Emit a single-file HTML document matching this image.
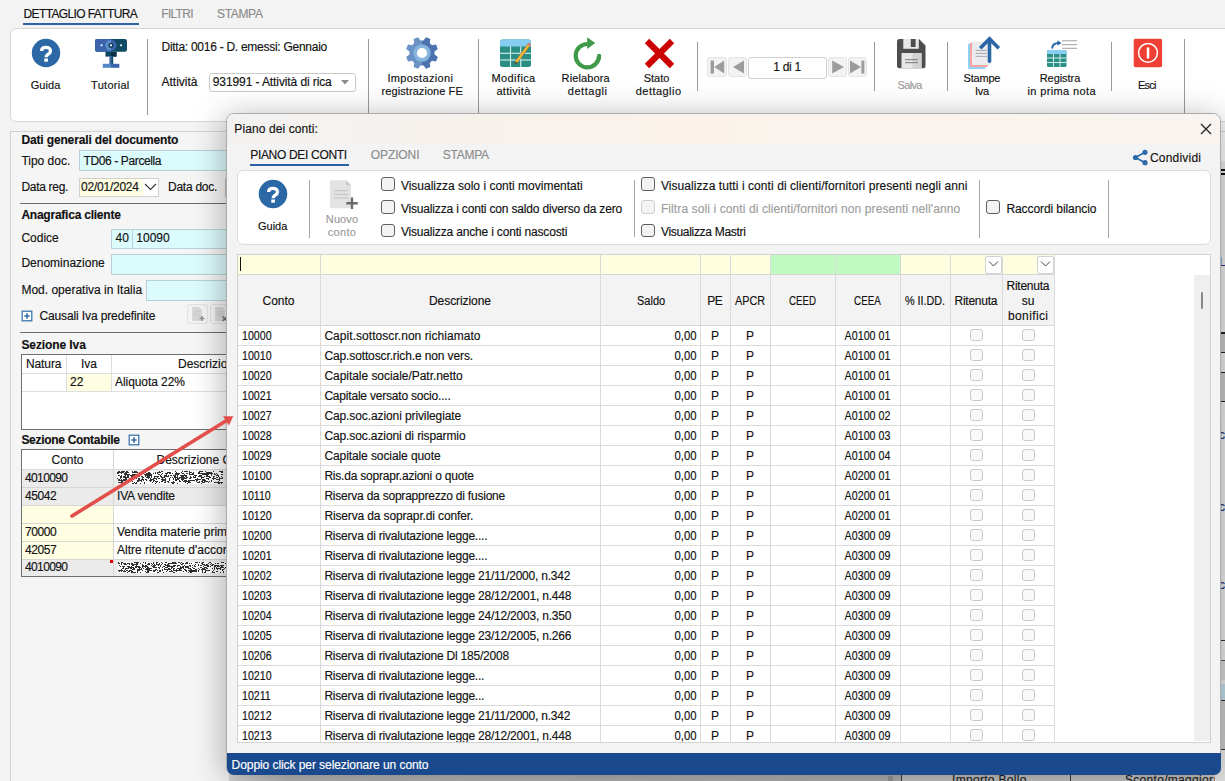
<!DOCTYPE html>
<html><head><meta charset="utf-8">
<style>
*{box-sizing:border-box}
html,body{margin:0;padding:0;overflow:hidden}
body{width:1225px;height:781px;overflow:hidden;position:relative;background:#f3f3f3;font-family:"Liberation Sans",sans-serif;font-size:12px;color:#111}
.a{position:absolute}
.t{position:absolute;white-space:pre;line-height:14px;font-size:12px;-webkit-text-stroke:0.15px currentColor}
.c{text-align:center}
.sep{position:absolute;width:1px;background:#9a9a9a}
/* ribbon */
#ribbon{position:absolute;left:10px;top:28px;width:1230px;height:94px;border:1px solid #d6d6d6;border-radius:6px;background:#fff}
/* left panel */
#lp{position:absolute;left:10px;top:131px;width:1300px;height:660px;border:1px solid #d2d2d2;background:#f5f5f5}
.b{font-weight:bold}
.inp{position:absolute;border:1px solid #b9cfd9;background:#dcfbfd}
/* dialog */
#dlg{position:absolute;left:226px;top:113px;width:995px;height:662px;border-radius:8px;background:#f3f3f3;box-shadow:-2px 4px 32px rgba(0,0,0,.3);overflow:hidden;border:1px solid #ababab}
</style></head><body>

<!-- ===== background app ===== -->
<div class="t" style="left:23.5px;top:7px;letter-spacing:-0.62px">DETTAGLIO FATTURA</div>
<div class="a" style="left:23px;top:23px;width:116px;height:2px;background:#2d63a6"></div>
<div class="t" style="left:161.3px;top:7px;color:#8c8c8c;letter-spacing:-0.72px">FILTRI</div>
<div class="t" style="left:217px;top:7px;color:#8c8c8c;letter-spacing:-0.33px">STAMPA</div>

<div id="ribbon"></div>
<!-- separators -->
<div class="sep" style="left:147px;top:39px;height:76px"></div>
<div class="sep" style="left:368px;top:39px;height:76px"></div>
<div class="sep" style="left:478px;top:39px;height:76px"></div>
<div class="sep" style="left:697px;top:42px;height:49px"></div>
<div class="sep" style="left:874px;top:42px;height:49px"></div>
<div class="sep" style="left:947px;top:42px;height:49px"></div>
<div class="sep" style="left:1111px;top:42px;height:49px"></div>
<div class="sep" style="left:1184px;top:39px;height:80px"></div>

<!-- Guida icon -->
<svg class="a" style="left:31px;top:38px" width="30" height="30" viewBox="0 0 30 30">
<circle cx="15" cy="15" r="14.2" fill="#2c68a5"/>
<path d="M10.6 13C10.6 10.3 12.6 9.3 15 9.3C17.6 9.3 19.5 10.8 19.5 12.9C19.5 14.8 18.2 15.6 16.9 16.4C15.7 17.2 15.1 17.8 15.1 19.3" fill="none" stroke="#fff" stroke-width="3.3"/>
<rect x="13.3" y="20.5" width="3.6" height="3.2" fill="#fff"/>
</svg>

<!-- Tutorial webcam -->
<svg class="a" style="left:94px;top:38px" width="34" height="32" viewBox="0 0 34 32">
<defs><clipPath id="lensL"><rect x="0" y="0" width="17" height="20"/></clipPath></defs>
<rect x="1" y="1" width="32" height="12.8" rx="2.2" fill="#0f4b64"/>
<path d="M3.2 1H17V13.8H3.2A2.2 2.2 0 0 1 1 11.6V3.2A2.2 2.2 0 0 1 3.2 1z" fill="#3d63ad"/>
<circle cx="17" cy="7.3" r="5.5" fill="#3d63ad"/>
<circle cx="17" cy="7.3" r="5.5" fill="#5b8fca" clip-path="url(#lensL)"/>
<circle cx="17" cy="7.3" r="2.6" fill="#123f60"/>
<circle cx="17" cy="7.3" r="1.1" fill="#fff"/>
<rect x="6.6" y="6.4" width="1.8" height="1.8" fill="#fff"/>
<rect x="26.2" y="6.4" width="1.8" height="1.8" fill="#fff"/>
<rect x="11.5" y="13.8" width="11" height="4.8" fill="#0b4660"/>
<rect x="17" y="13.8" width="5.5" height="4.8" fill="#0a2f48"/>
<rect x="15.4" y="18.6" width="2" height="7.4" fill="#3d63ad"/>
<rect x="17.2" y="18.6" width="2" height="7.4" fill="#0d4a63"/>
<rect x="8.8" y="25.8" width="8.2" height="4" fill="#5088c8"/>
<rect x="17" y="25.8" width="8.3" height="4" fill="#3d63ad"/>
</svg>

<!-- Ditta / Attivita -->
<div class="t" style="left:161.5px;top:39.7px;letter-spacing:-0.27px">Ditta: 0016 - D. emessi: Gennaio</div>
<div class="t" style="left:161.5px;top:75px">Attività</div>
<div class="a" style="left:208.5px;top:72.5px;width:147px;height:19.5px;border:1px solid #c9c9c9;border-radius:3px;background:#fff"></div>
<div class="t" style="left:212.8px;top:75px;letter-spacing:-0.1px">931991 - Attività di rica</div>
<svg class="a" style="left:340px;top:79px" width="10" height="6" viewBox="0 0 10 6"><path d="M1 1h8l-4 4.5z" fill="#8a8a8a"/></svg>

<!-- Gear -->
<svg class="a" style="left:405px;top:35.7px" width="34" height="34" viewBox="0 0 34 34">
<defs><clipPath id="gl"><rect x="0" y="0" width="17" height="34"/></clipPath><clipPath id="gr"><rect x="17" y="0" width="17" height="34"/></clipPath></defs>
<path d="M18.54 4.49 L20.94 1.18 L25.40 3.03 L24.76 7.07 L26.93 9.24 L30.97 8.60 L32.82 13.06 L29.51 15.46 L29.51 18.54 L32.82 20.94 L30.97 25.40 L26.93 24.76 L24.76 26.93 L25.40 30.97 L20.94 32.82 L18.54 29.51 L15.46 29.51 L13.06 32.82 L8.60 30.97 L9.24 26.93 L7.07 24.76 L3.03 25.40 L1.18 20.94 L4.49 18.54 L4.49 15.46 L1.18 13.06 L3.03 8.60 L7.07 9.24 L9.24 7.07 L8.60 3.03 L13.06 1.18 L15.46 4.49Z" fill="#6a92c4" clip-path="url(#gl)"/>
<path d="M18.54 4.49 L20.94 1.18 L25.40 3.03 L24.76 7.07 L26.93 9.24 L30.97 8.60 L32.82 13.06 L29.51 15.46 L29.51 18.54 L32.82 20.94 L30.97 25.40 L26.93 24.76 L24.76 26.93 L25.40 30.97 L20.94 32.82 L18.54 29.51 L15.46 29.51 L13.06 32.82 L8.60 30.97 L9.24 26.93 L7.07 24.76 L3.03 25.40 L1.18 20.94 L4.49 18.54 L4.49 15.46 L1.18 13.06 L3.03 8.60 L7.07 9.24 L9.24 7.07 L8.60 3.03 L13.06 1.18 L15.46 4.49Z" fill="#4c72b0" clip-path="url(#gr)"/>
<circle cx="17" cy="17" r="8.7" fill="#86b4de"/>
<circle cx="17" cy="17" r="5.1" fill="#fff"/>
</svg>

<!-- Modifica attivita -->
<svg class="a" style="left:499px;top:39px" width="34" height="30" viewBox="0 0 34 30">
<rect x="1" y="0.6" width="31" height="27.5" rx="2.5" fill="#2b8e85"/>
<path d="M1 3.1a2.5 2.5 0 0 1 2.5-2.5h26a2.5 2.5 0 0 1 2.5 2.5v4.4h-31z" fill="#86cdf2"/>
<g stroke="#d7f0ec" stroke-width="1.1">
<line x1="1" y1="14.3" x2="32" y2="14.3"/><line x1="1" y1="21" x2="32" y2="21"/>
<line x1="11.5" y1="7.5" x2="11.5" y2="28"/><line x1="21.7" y1="7.5" x2="21.7" y2="28"/>
</g>
<path d="M28.6 5.2l2.3 1.7-12.2 16.6-2.6 1.3 0.3-3z" fill="#f3b73a" stroke="#7a5a20" stroke-width="0.45"/>
<path d="M28.6 5.2l2.3 1.7 1.1-1.6-2.3-1.7z" fill="#e86f79"/>
<path d="M16.1 24.8l0.3-2.1 1.8 1.3z" fill="#222"/>
</svg>

<!-- Rielabora refresh -->
<svg class="a" style="left:571px;top:36px" width="34" height="36" viewBox="0 0 34 36">
<path d="M28.1 19.8A11.7 11.7 0 1 1 16.6 8" fill="none" stroke="#3e9a48" stroke-width="4.2"/>
<circle cx="28.1" cy="19.8" r="2.1" fill="#3e9a48"/>
<path d="M16.2 1.2L24.2 7.1 16.2 12.9z" fill="#3e9a48"/>
</svg>

<!-- Stato X -->
<svg class="a" style="left:644px;top:38px" width="31" height="31" viewBox="0 0 31 31">
<path d="M3 3L28 28M28 3L3 28" stroke="#cc0000" stroke-width="6.2"/>
</svg>

<!-- nav -->
<div class="a" style="left:707px;top:56.5px;width:19.5px;height:20px;border:1px solid #e4e4e4;border-radius:3px;background:#f3f3f3"></div>
<div class="a" style="left:727.5px;top:56.5px;width:19.5px;height:20px;border:1px solid #e4e4e4;border-radius:3px;background:#f3f3f3"></div>
<div class="a" style="left:747.5px;top:57px;width:79px;height:21.5px;border:1px solid #cfcfcf;border-radius:3px;background:#fff"></div>
<div class="a" style="left:827.5px;top:56.5px;width:19px;height:20px;border:1px solid #e4e4e4;border-radius:3px;background:#f3f3f3"></div>
<div class="a" style="left:847.5px;top:56.5px;width:19.5px;height:20px;border:1px solid #e4e4e4;border-radius:3px;background:#f3f3f3"></div>
<svg class="a" style="left:707px;top:56px" width="162" height="22" viewBox="0 0 162 22">
<rect x="3.6" y="4.6" width="3.4" height="13" fill="#9c9c9c"/><path d="M7.2 11.1l10-6.5v13z" fill="#9c9c9c"/>
<path d="M26 11.1l11-6.5v13z" fill="#9c9c9c"/>
<path d="M137 11.1l-11.8-6.5v13z" fill="#9c9c9c"/>
<path d="M154 11.1l-11-6.5v13z" fill="#9c9c9c"/><rect x="154.4" y="4.6" width="3" height="13" fill="#9c9c9c"/>
</svg>
<div class="t c" style="left:747.5px;top:60px;width:79px;letter-spacing:-0.3px">1 di 1</div>

<!-- Salva floppy -->
<svg class="a" style="left:896px;top:38px" width="31" height="31" viewBox="0 0 31 31">
<path d="M3.5 1h19.5l6.5 6.5v20.2a2.5 2.5 0 0 1-2.5 2.5h-23.5a2.5 2.5 0 0 1-2.5-2.5v-24.2a2.5 2.5 0 0 1 2.5-2.5z" fill="#4d4d4d"/>
<rect x="7.3" y="1" width="15.5" height="9.8" fill="#e6e6e6"/>
<rect x="14.8" y="1" width="4.8" height="8" fill="#4d4d4d"/>
<rect x="5.5" y="15" width="20" height="15.2" fill="#e6e6e6"/>
<rect x="16.5" y="15" width="9" height="15.2" fill="#d2d2d2"/>
<rect x="9" y="21" width="13" height="1.2" fill="#8a8a8a"/>
<rect x="9" y="24" width="13" height="1.2" fill="#8a8a8a"/>
</svg>

<!-- Stampe Iva -->
<svg class="a" style="left:966px;top:36px" width="36" height="34" viewBox="0 0 36 34">
<rect x="2" y="7.5" width="17.5" height="25.5" rx="1.5" fill="#8fd0f5"/>
<rect x="4" y="6.5" width="18" height="24.5" rx="1.5" fill="#f7a3a0"/>
<rect x="6" y="5.5" width="18.5" height="23.5" rx="1" fill="#ececee"/>
<g stroke="#a2a2a8" stroke-width="0.9"><line x1="9.5" y1="14.4" x2="21" y2="14.4"/><line x1="9.5" y1="17.4" x2="21" y2="17.4"/><line x1="9.5" y1="20.4" x2="21" y2="20.4"/></g>
<path d="M23.5 25.2V4" fill="none" stroke="#2a66a6" stroke-width="3.6" stroke-linecap="round"/>
<path d="M14.2 12.2L23.5 2.9 32.8 12.2" fill="none" stroke="#2a66a6" stroke-width="3.6" stroke-linejoin="miter"/>
</svg>

<!-- Registra prima nota -->
<svg class="a" style="left:1046px;top:39px" width="34" height="30" viewBox="0 0 34 30">
<rect x="1" y="11" width="19.5" height="17" rx="1.5" fill="#2c8e86"/>
<path d="M1 12.5a1.5 1.5 0 0 1 1.5-1.5h16.5a1.5 1.5 0 0 1 1.5 1.5v2.5h-19.5z" fill="#88cdf2"/>
<g stroke="#cfeeea" stroke-width="1"><line x1="1" y1="19" x2="20.5" y2="19"/><line x1="1" y1="23.5" x2="20.5" y2="23.5"/><line x1="7.5" y1="15" x2="7.5" y2="28"/><line x1="14" y1="15" x2="14" y2="28"/></g>
<g stroke="#a8a8a8" stroke-width="1.1"><line x1="16" y1="1.8" x2="31" y2="1.8"/><line x1="16" y1="5.6" x2="31" y2="5.6"/><line x1="16" y1="9.3" x2="31" y2="9.3"/></g>
<path d="M6 9.5c0.5-3.5 3-5.5 6.5-5.5" fill="none" stroke="#2a67a8" stroke-width="2"/>
<path d="M11.5 1.3l4 2.7-4 2.7z" fill="#2a67a8"/>
</svg>

<!-- Esci -->
<svg class="a" style="left:1133px;top:38px" width="30" height="30" viewBox="0 0 30 30">
<rect x="0.7" y="0.8" width="28.4" height="28.5" rx="2" fill="#ef4036"/>
<circle cx="15" cy="14.8" r="9.4" fill="none" stroke="#fff" stroke-width="1.5"/>
<rect x="13.8" y="9.3" width="2.5" height="11.4" rx="1.2" fill="#fff"/>
</svg>
<div class="t c" style="left:-24.5px;top:78.2px;width:140px;font-size:11px;letter-spacing:0.09px;text-indent:0.09px;">Guida</div>
<div class="t c" style="left:40.2px;top:78.2px;width:140px;font-size:11px;letter-spacing:0.27px;text-indent:0.27px;">Tutorial</div>
<div class="t c" style="left:350.2px;top:71.2px;width:140px;font-size:11px;letter-spacing:0.35px;text-indent:0.35px;">Impostazioni</div>
<div class="t c" style="left:352.2px;top:84.0px;width:140px;font-size:11px;letter-spacing:0.07px;text-indent:0.07px;">registrazione FE</div>
<div class="t c" style="left:443.4px;top:71.2px;width:140px;font-size:11px;letter-spacing:0.39px;text-indent:0.39px;">Modifica</div>
<div class="t c" style="left:443.4px;top:84.0px;width:140px;font-size:11px;letter-spacing:0.31px;text-indent:0.31px;">attività</div>
<div class="t c" style="left:515.6px;top:71.2px;width:140px;font-size:11px;letter-spacing:0.11px;text-indent:0.11px;">Rielabora</div>
<div class="t c" style="left:517.4px;top:84.0px;width:140px;font-size:11px;letter-spacing:0.53px;text-indent:0.53px;">dettagli</div>
<div class="t c" style="left:586.5px;top:71.2px;width:140px;font-size:11px;letter-spacing:0px;text-indent:0px;">Stato</div>
<div class="t c" style="left:588.4px;top:84.0px;width:140px;font-size:11px;letter-spacing:0.46px;text-indent:0.46px;">dettaglio</div>
<div class="t c" style="left:840.0px;top:78.0px;width:140px;font-size:11px;letter-spacing:-0.68px;text-indent:-0.68px;color:#9a9a9a;">Salva</div>
<div class="t c" style="left:912.0px;top:71.2px;width:140px;font-size:11px;letter-spacing:-0.22px;text-indent:-0.22px;">Stampe</div>
<div class="t c" style="left:912.0px;top:84.0px;width:140px;font-size:11px;letter-spacing:-0.34px;text-indent:-0.34px;">Iva</div>
<div class="t c" style="left:990.0px;top:71.2px;width:140px;font-size:11px;letter-spacing:-0.04px;text-indent:-0.04px;">Registra</div>
<div class="t c" style="left:991.5px;top:84.0px;width:140px;font-size:11px;letter-spacing:0.37px;text-indent:0.37px;">in prima nota</div>
<div class="t c" style="left:1077.3px;top:77.6px;width:140px;font-size:11px;letter-spacing:-0.76px;text-indent:-0.76px;">Esci</div>

<div id="lp">
</div>
<div class="t b" style="left:21.4px;top:132.9px;letter-spacing:-0.14px">Dati generali del documento</div>
<div class="t" style="left:21.4px;top:153.9px">Tipo doc.</div>
<div class="inp" style="left:79px;top:150px;width:170px;height:21px"></div>
<div class="t" style="left:83.5px;top:153.5px;letter-spacing:-0.38px">TD06 - Parcella</div>
<div class="t" style="left:21.4px;top:179.8px;letter-spacing:-0.29px">Data reg.</div>
<div class="a" style="left:79px;top:177.5px;width:80px;height:19.5px;border:1px solid #d0d0d0;background:#fff"></div>
<div class="a" style="left:80px;top:178.5px;width:63px;height:17.5px;background:#fffde2"></div>
<svg class="a" style="left:143px;top:181px" width="15" height="12" viewBox="0 0 15 12"><path d="M2 3l5.5 5.5L13 3" fill="none" stroke="#333" stroke-width="1.1"/></svg>
<div class="t" style="left:81px;top:179.8px;letter-spacing:-0.23px">02/01/2024</div>
<div class="t" style="left:168px;top:179.8px;letter-spacing:-0.26px">Data doc.</div>
<div class="a" style="left:224.5px;top:177.5px;width:20px;height:19.5px;border:1px solid #bdbdbd;background:#eee"></div>
<div class="a" style="left:20px;top:203px;width:220px;height:1px;background:#6c6c6c"></div>
<div class="t b" style="left:21.4px;top:208px;letter-spacing:-0.23px">Anagrafica cliente</div>
<div class="t" style="left:21.4px;top:231.4px">Codice</div>
<div class="inp" style="left:111px;top:228.5px;width:140px;height:20.5px"></div>
<div class="a" style="left:132px;top:229px;width:1px;height:19.5px;background:#b9cfd9"></div>
<div class="t" style="left:115.5px;top:231px">40</div>
<div class="t" style="left:136.3px;top:231px">10090</div>
<div class="t" style="left:21.4px;top:256.4px">Denominazione</div>
<div class="inp" style="left:111px;top:254px;width:140px;height:21px"></div>
<div class="t" style="left:21.4px;top:282.6px">Mod. operativa in Italia</div>
<div class="inp" style="left:146px;top:280px;width:100px;height:21px"></div>
<svg class="a" style="left:21px;top:310px" width="12" height="12" viewBox="0 0 12 12"><rect x="1.2" y="1.2" width="9.6" height="9.6" fill="#fff" stroke="#2f6aa8" stroke-width="1.2"/><path d="M6 3.3v5.4M3.3 6h5.4" stroke="#2f6aa8" stroke-width="1.6"/></svg>
<div class="t" style="left:39.4px;top:308.5px;letter-spacing:-0.12px">Causali Iva predefinite</div>
<div class="a" style="left:187px;top:304px;width:21px;height:20px;border:1px solid #e2e2e2;border-radius:3px;background:#f3f3f3"></div>
<svg class="a" style="left:191px;top:306px" width="15" height="17" viewBox="0 0 15 17"><path d="M1 1h7l3 3v11H1z" fill="#d8d8d8"/><path d="M3 5.5h6M3 7.5h6M3 9.5h6" stroke="#cacaca" stroke-width="0.8"/><path d="M8.5 12.5h5M11 10v5" stroke="#8e8e8e" stroke-width="1.4"/></svg>
<div class="a" style="left:210px;top:304px;width:21px;height:20px;border:1px solid #e2e2e2;border-radius:3px;background:#f3f3f3"></div>
<svg class="a" style="left:214px;top:306px" width="15" height="17" viewBox="0 0 15 17"><path d="M1 1h7l3 3v11H1z" fill="#d8d8d8"/><path d="M3 5.5h6M3 7.5h6M3 9.5h6" stroke="#cacaca" stroke-width="0.8"/><path d="M8.5 10.5l4.5 4.5M13 10.5l-4.5 4.5" stroke="#6e6e6e" stroke-width="1.4"/></svg>
<div class="a" style="left:19.5px;top:331.5px;width:220px;height:1px;background:#6c6c6c"></div>
<div class="t b" style="left:21.4px;top:337.8px;letter-spacing:-0.09px">Sezione Iva</div>
<!-- iva table -->
<div class="a" style="left:21px;top:353.5px;width:230px;height:76.5px;border:1px solid #6f6f6f;background:#fff"></div>
<div class="a" style="left:22px;top:373px;width:220px;height:1px;background:#dedede"></div>
<div class="a" style="left:22px;top:390.5px;width:220px;height:1px;background:#dedede"></div>
<div class="a" style="left:66px;top:354.5px;width:1px;height:36px;background:#dedede"></div>
<div class="a" style="left:111px;top:354.5px;width:1px;height:36px;background:#dedede"></div>
<div class="a" style="left:67px;top:374px;width:44px;height:16.5px;background:#fffde2"></div>
<div class="t" style="left:26px;top:356.8px;letter-spacing:-0.11px">Natura</div>
<div class="t c" style="left:67px;top:356.8px;width:44px">Iva</div>
<div class="t" style="left:178px;top:356.8px">Descrizione</div>
<div class="t" style="left:70px;top:374.5px">22</div>
<div class="t" style="left:115px;top:374.5px;letter-spacing:-0.07px">Aliquota 22%</div>
<div class="t b" style="left:21.4px;top:433px;letter-spacing:-0.3px">Sezione Contabile</div>
<svg class="a" style="left:128px;top:434px" width="12" height="12" viewBox="0 0 12 12"><rect x="1.2" y="1.2" width="9.6" height="9.6" fill="#fff" stroke="#2f6aa8" stroke-width="1.2"/><path d="M6 3.3v5.4M3.3 6h5.4" stroke="#2f6aa8" stroke-width="1.6"/></svg>
<!-- contabile table -->
<div class="a" style="left:21px;top:449px;width:230px;height:127.5px;border:1px solid #6f6f6f;background:#fff"></div>
<div class="a" style="left:22px;top:469px;width:220px;height:18px;background:#ebebeb"></div>
<div class="a" style="left:22px;top:487px;width:220px;height:18px;background:#ebebeb"></div>
<div class="a" style="left:22px;top:505px;width:91px;height:18px;background:#fffde2"></div>
<div class="a" style="left:22px;top:523px;width:91px;height:18px;background:#fffde2"></div>
<div class="a" style="left:22px;top:541px;width:91px;height:18px;background:#fffde2"></div>
<div class="a" style="left:22px;top:559px;width:220px;height:17px;background:#ebebeb"></div>
<div class="a" style="left:22px;top:469px;width:220px;height:1px;background:#dcdcdc"></div>
<div class="a" style="left:22px;top:487px;width:220px;height:1px;background:#d6d6d6"></div>
<div class="a" style="left:22px;top:505px;width:220px;height:1px;background:#d6d6d6"></div>
<div class="a" style="left:22px;top:523px;width:220px;height:1px;background:#d6d6d6"></div>
<div class="a" style="left:22px;top:541px;width:220px;height:1px;background:#d6d6d6"></div>
<div class="a" style="left:22px;top:559px;width:220px;height:1px;background:#d6d6d6"></div>
<div class="a" style="left:113px;top:450px;width:1px;height:126px;background:#d6d6d6"></div>
<div class="a" style="left:110px;top:560px;width:3px;height:3px;background:#e00000"></div>
<div class="t c" style="left:22px;top:453px;width:91px">Conto</div>
<div class="t" style="left:156.5px;top:453px">Descrizione C</div>
<div class="t" style="left:25px;top:470.8px;letter-spacing:-0.62px">4010090</div>
<div class="t" style="left:25px;top:488.8px;letter-spacing:-0.4px">45042</div>
<div class="t" style="left:117px;top:488.8px;letter-spacing:-0.18px">IVA vendite</div>
<div class="t" style="left:25px;top:524.8px;letter-spacing:-0.4px">70000</div>
<div class="t" style="left:117px;top:524.8px">Vendita materie prim</div>
<div class="t" style="left:25px;top:542.8px;letter-spacing:-0.4px">42057</div>
<div class="t" style="left:117px;top:542.8px">Altre ritenute d'accor</div>
<div class="t" style="left:25px;top:560.3px;letter-spacing:-0.62px">4010090</div>

<!-- ===== dialog ===== -->
<!--EXTRA-->
<svg class="a" style="left:117px;top:471px" width="106" height="13" viewBox="0 0 106 13"><rect width="106" height="13" fill="#fafafa"/><path d="M1 0h1v1h-1zM2 0h1v1h-1zM4 0h1v1h-1zM5 0h1v1h-1zM6 0h2v1h-2zM9 0h2v1h-2zM15 0h1v1h-1zM17 0h3v1h-3zM25 0h3v1h-3zM42 0h1v1h-1zM44 0h1v1h-1zM45 0h1v1h-1zM58 0h1v1h-1zM65 0h1v1h-1zM67 0h2v1h-2zM69 0h2v1h-2zM72 0h1v1h-1zM82 0h4v1h-4zM88 0h1v1h-1zM96 0h1v1h-1zM102 0h1v1h-1zM103 0h3v1h-3zM0 1h6v1h-6zM6 1h1v1h-1zM8 1h3v1h-3zM11 1h1v1h-1zM15 1h4v1h-4zM19 1h2v1h-2zM22 1h1v1h-1zM23 1h1v1h-1zM27 1h1v1h-1zM28 1h1v1h-1zM31 1h2v1h-2zM38 1h1v1h-1zM40 1h4v1h-4zM50 1h4v1h-4zM59 1h1v1h-1zM64 1h1v1h-1zM72 1h3v1h-3zM76 1h1v1h-1zM81 1h2v1h-2zM89 1h4v1h-4zM93 1h1v1h-1zM94 1h1v1h-1zM104 1h1v1h-1zM105 1h1v1h-1zM0 2h1v1h-1zM1 2h1v1h-1zM4 2h1v1h-1zM7 2h1v1h-1zM8 2h2v1h-2zM26 2h1v1h-1zM29 2h2v1h-2zM31 2h3v1h-3zM36 2h1v1h-1zM38 2h1v1h-1zM40 2h1v1h-1zM45 2h1v1h-1zM48 2h2v1h-2zM50 2h1v1h-1zM52 2h2v1h-2zM55 2h1v1h-1zM58 2h3v1h-3zM61 2h2v1h-2zM65 2h2v1h-2zM69 2h2v1h-2zM72 2h1v1h-1zM75 2h1v1h-1zM76 2h1v1h-1zM81 2h2v1h-2zM83 2h7v1h-7zM90 2h1v1h-1zM91 2h5v1h-5zM97 2h1v1h-1zM99 2h1v1h-1zM7 3h3v1h-3zM10 3h3v1h-3zM15 3h3v1h-3zM18 3h1v1h-1zM19 3h1v1h-1zM22 3h1v1h-1zM23 3h1v1h-1zM24 3h1v1h-1zM27 3h1v1h-1zM28 3h3v1h-3zM31 3h4v1h-4zM41 3h1v1h-1zM42 3h1v1h-1zM44 3h1v1h-1zM49 3h1v1h-1zM58 3h3v1h-3zM61 3h1v1h-1zM67 3h1v1h-1zM72 3h1v1h-1zM73 3h3v1h-3zM76 3h1v1h-1zM85 3h3v1h-3zM88 3h1v1h-1zM89 3h3v1h-3zM94 3h1v1h-1zM97 3h1v1h-1zM98 3h1v1h-1zM100 3h1v1h-1zM104 3h2v1h-2zM1 4h1v1h-1zM2 4h1v1h-1zM4 4h1v1h-1zM8 4h1v1h-1zM10 4h2v1h-2zM13 4h4v1h-4zM17 4h1v1h-1zM19 4h1v1h-1zM22 4h1v1h-1zM28 4h3v1h-3zM31 4h1v1h-1zM32 4h2v1h-2zM34 4h1v1h-1zM43 4h1v1h-1zM47 4h2v1h-2zM49 4h1v1h-1zM51 4h1v1h-1zM53 4h1v1h-1zM54 4h1v1h-1zM56 4h3v1h-3zM60 4h1v1h-1zM63 4h7v1h-7zM77 4h2v1h-2zM79 4h1v1h-1zM82 4h3v1h-3zM89 4h2v1h-2zM94 4h1v1h-1zM99 4h3v1h-3zM3 5h1v1h-1zM4 5h1v1h-1zM6 5h3v1h-3zM10 5h2v1h-2zM14 5h1v1h-1zM15 5h2v1h-2zM21 5h2v1h-2zM24 5h2v1h-2zM28 5h1v1h-1zM30 5h3v1h-3zM34 5h1v1h-1zM37 5h1v1h-1zM38 5h1v1h-1zM39 5h2v1h-2zM41 5h1v1h-1zM43 5h2v1h-2zM47 5h1v1h-1zM48 5h1v1h-1zM49 5h3v1h-3zM57 5h2v1h-2zM60 5h1v1h-1zM64 5h3v1h-3zM68 5h1v1h-1zM69 5h1v1h-1zM73 5h1v1h-1zM76 5h1v1h-1zM78 5h1v1h-1zM81 5h3v1h-3zM84 5h1v1h-1zM87 5h1v1h-1zM89 5h1v1h-1zM90 5h3v1h-3zM96 5h2v1h-2zM101 5h1v1h-1zM104 5h1v1h-1zM3 6h2v1h-2zM6 6h2v1h-2zM8 6h3v1h-3zM11 6h1v1h-1zM14 6h3v1h-3zM19 6h1v1h-1zM25 6h1v1h-1zM26 6h1v1h-1zM29 6h4v1h-4zM34 6h1v1h-1zM37 6h1v1h-1zM40 6h1v1h-1zM44 6h4v1h-4zM53 6h1v1h-1zM55 6h1v1h-1zM57 6h1v1h-1zM58 6h3v1h-3zM62 6h3v1h-3zM65 6h3v1h-3zM69 6h2v1h-2zM73 6h2v1h-2zM76 6h2v1h-2zM78 6h1v1h-1zM84 6h1v1h-1zM85 6h2v1h-2zM92 6h2v1h-2zM96 6h1v1h-1zM99 6h2v1h-2zM102 6h1v1h-1zM105 6h1v1h-1zM0 7h1v1h-1zM3 7h1v1h-1zM8 7h1v1h-1zM9 7h1v1h-1zM12 7h2v1h-2zM16 7h2v1h-2zM19 7h1v1h-1zM21 7h1v1h-1zM22 7h1v1h-1zM25 7h1v1h-1zM31 7h1v1h-1zM33 7h1v1h-1zM36 7h1v1h-1zM37 7h2v1h-2zM39 7h1v1h-1zM41 7h1v1h-1zM42 7h1v1h-1zM45 7h1v1h-1zM48 7h1v1h-1zM52 7h1v1h-1zM56 7h1v1h-1zM58 7h1v1h-1zM60 7h1v1h-1zM61 7h1v1h-1zM62 7h1v1h-1zM64 7h2v1h-2zM66 7h4v1h-4zM72 7h1v1h-1zM73 7h1v1h-1zM80 7h1v1h-1zM84 7h1v1h-1zM89 7h1v1h-1zM90 7h1v1h-1zM91 7h1v1h-1zM95 7h4v1h-4zM102 7h2v1h-2zM104 7h2v1h-2zM1 8h1v1h-1zM2 8h1v1h-1zM4 8h1v1h-1zM6 8h1v1h-1zM7 8h3v1h-3zM13 8h2v1h-2zM21 8h1v1h-1zM22 8h1v1h-1zM24 8h2v1h-2zM26 8h1v1h-1zM28 8h2v1h-2zM33 8h4v1h-4zM39 8h1v1h-1zM44 8h5v1h-5zM52 8h1v1h-1zM56 8h1v1h-1zM58 8h1v1h-1zM59 8h3v1h-3zM64 8h1v1h-1zM65 8h2v1h-2zM78 8h2v1h-2zM80 8h1v1h-1zM81 8h3v1h-3zM85 8h3v1h-3zM91 8h1v1h-1zM96 8h1v1h-1zM99 8h4v1h-4zM1 9h3v1h-3zM4 9h2v1h-2zM6 9h3v1h-3zM10 9h1v1h-1zM14 9h1v1h-1zM20 9h1v1h-1zM21 9h1v1h-1zM22 9h3v1h-3zM26 9h1v1h-1zM29 9h1v1h-1zM32 9h1v1h-1zM33 9h2v1h-2zM36 9h1v1h-1zM37 9h1v1h-1zM45 9h1v1h-1zM46 9h3v1h-3zM52 9h1v1h-1zM58 9h2v1h-2zM62 9h1v1h-1zM65 9h1v1h-1zM67 9h3v1h-3zM71 9h4v1h-4zM75 9h3v1h-3zM79 9h1v1h-1zM80 9h1v1h-1zM85 9h1v1h-1zM86 9h2v1h-2zM88 9h1v1h-1zM94 9h1v1h-1zM102 9h1v1h-1zM4 10h1v1h-1zM5 10h1v1h-1zM9 10h1v1h-1zM15 10h1v1h-1zM20 10h1v1h-1zM21 10h1v1h-1zM24 10h1v1h-1zM33 10h1v1h-1zM36 10h1v1h-1zM38 10h2v1h-2zM40 10h1v1h-1zM44 10h2v1h-2zM48 10h1v1h-1zM50 10h2v1h-2zM56 10h1v1h-1zM62 10h1v1h-1zM63 10h1v1h-1zM66 10h1v1h-1zM67 10h1v1h-1zM68 10h2v1h-2zM70 10h3v1h-3zM79 10h1v1h-1zM82 10h1v1h-1zM84 10h2v1h-2zM87 10h4v1h-4zM92 10h1v1h-1zM94 10h1v1h-1zM101 10h1v1h-1zM1 11h3v1h-3zM4 11h1v1h-1zM5 11h1v1h-1zM9 11h1v1h-1zM17 11h1v1h-1zM19 11h1v1h-1zM27 11h1v1h-1zM35 11h1v1h-1zM39 11h1v1h-1zM42 11h1v1h-1zM47 11h2v1h-2zM51 11h1v1h-1zM54 11h4v1h-4zM68 11h1v1h-1zM71 11h3v1h-3zM80 11h2v1h-2zM82 11h1v1h-1zM85 11h1v1h-1zM86 11h2v1h-2zM91 11h1v1h-1zM97 11h1v1h-1zM98 11h4v1h-4zM102 11h1v1h-1zM103 11h1v1h-1zM104 11h2v1h-2zM4 12h1v1h-1zM8 12h1v1h-1zM15 12h2v1h-2zM18 12h2v1h-2zM23 12h1v1h-1zM27 12h1v1h-1zM38 12h1v1h-1zM55 12h2v1h-2zM60 12h1v1h-1zM70 12h1v1h-1zM84 12h1v1h-1zM101 12h2v1h-2zM104 12h1v1h-1z" fill="#1a1a1a" opacity="0.9"/></svg>
<svg class="a" style="left:118px;top:562px" width="110" height="11" viewBox="0 0 110 11"><rect width="110" height="11" fill="#fafafa"/><path d="M0 0h1v1h-1zM3 0h2v1h-2zM16 0h5v1h-5zM25 0h1v1h-1zM27 0h1v1h-1zM35 0h1v1h-1zM38 0h2v1h-2zM43 0h1v1h-1zM47 0h2v1h-2zM54 0h4v1h-4zM60 0h1v1h-1zM61 0h1v1h-1zM63 0h1v1h-1zM68 0h1v1h-1zM69 0h1v1h-1zM77 0h3v1h-3zM81 0h1v1h-1zM84 0h2v1h-2zM91 0h1v1h-1zM92 0h1v1h-1zM103 0h2v1h-2zM105 0h1v1h-1zM108 0h1v1h-1zM0 1h2v1h-2zM3 1h1v1h-1zM5 1h1v1h-1zM6 1h2v1h-2zM9 1h3v1h-3zM13 1h2v1h-2zM18 1h2v1h-2zM22 1h1v1h-1zM27 1h1v1h-1zM30 1h2v1h-2zM33 1h1v1h-1zM35 1h1v1h-1zM38 1h1v1h-1zM41 1h1v1h-1zM44 1h1v1h-1zM50 1h1v1h-1zM51 1h4v1h-4zM55 1h2v1h-2zM57 1h2v1h-2zM62 1h1v1h-1zM64 1h2v1h-2zM67 1h2v1h-2zM69 1h1v1h-1zM71 1h1v1h-1zM73 1h1v1h-1zM83 1h2v1h-2zM90 1h1v1h-1zM93 1h1v1h-1zM97 1h1v1h-1zM99 1h2v1h-2zM107 1h1v1h-1zM108 1h1v1h-1zM109 1h1v1h-1zM3 2h1v1h-1zM6 2h2v1h-2zM8 2h1v1h-1zM11 2h1v1h-1zM13 2h4v1h-4zM17 2h3v1h-3zM24 2h1v1h-1zM29 2h3v1h-3zM34 2h1v1h-1zM36 2h1v1h-1zM38 2h1v1h-1zM39 2h1v1h-1zM40 2h2v1h-2zM43 2h1v1h-1zM46 2h2v1h-2zM49 2h2v1h-2zM63 2h1v1h-1zM64 2h1v1h-1zM77 2h1v1h-1zM80 2h1v1h-1zM84 2h3v1h-3zM88 2h1v1h-1zM89 2h1v1h-1zM92 2h1v1h-1zM94 2h2v1h-2zM1 3h1v1h-1zM14 3h2v1h-2zM18 3h1v1h-1zM24 3h2v1h-2zM27 3h2v1h-2zM33 3h1v1h-1zM35 3h1v1h-1zM36 3h2v1h-2zM40 3h1v1h-1zM42 3h1v1h-1zM47 3h2v1h-2zM49 3h3v1h-3zM55 3h2v1h-2zM57 3h1v1h-1zM59 3h3v1h-3zM66 3h1v1h-1zM71 3h2v1h-2zM74 3h1v1h-1zM76 3h1v1h-1zM80 3h1v1h-1zM82 3h2v1h-2zM86 3h2v1h-2zM88 3h1v1h-1zM89 3h1v1h-1zM90 3h1v1h-1zM93 3h2v1h-2zM96 3h5v1h-5zM102 3h1v1h-1zM103 3h2v1h-2zM105 3h1v1h-1zM108 3h1v1h-1zM2 4h1v1h-1zM4 4h1v1h-1zM5 4h1v1h-1zM6 4h1v1h-1zM9 4h1v1h-1zM10 4h1v1h-1zM11 4h1v1h-1zM13 4h1v1h-1zM17 4h1v1h-1zM18 4h2v1h-2zM20 4h1v1h-1zM21 4h1v1h-1zM24 4h5v1h-5zM29 4h1v1h-1zM34 4h3v1h-3zM42 4h1v1h-1zM45 4h2v1h-2zM49 4h5v1h-5zM54 4h2v1h-2zM56 4h1v1h-1zM59 4h1v1h-1zM62 4h1v1h-1zM64 4h2v1h-2zM67 4h3v1h-3zM70 4h1v1h-1zM72 4h1v1h-1zM76 4h2v1h-2zM85 4h1v1h-1zM89 4h1v1h-1zM90 4h1v1h-1zM92 4h1v1h-1zM96 4h2v1h-2zM99 4h3v1h-3zM103 4h2v1h-2zM108 4h1v1h-1zM109 4h1v1h-1zM5 5h1v1h-1zM10 5h2v1h-2zM12 5h4v1h-4zM17 5h2v1h-2zM20 5h3v1h-3zM24 5h1v1h-1zM27 5h1v1h-1zM29 5h1v1h-1zM30 5h1v1h-1zM35 5h4v1h-4zM40 5h2v1h-2zM44 5h1v1h-1zM47 5h2v1h-2zM49 5h1v1h-1zM53 5h2v1h-2zM62 5h2v1h-2zM64 5h1v1h-1zM65 5h1v1h-1zM67 5h2v1h-2zM69 5h1v1h-1zM70 5h1v1h-1zM74 5h1v1h-1zM82 5h2v1h-2zM86 5h3v1h-3zM96 5h1v1h-1zM98 5h1v1h-1zM102 5h2v1h-2zM104 5h2v1h-2zM107 5h1v1h-1zM4 6h2v1h-2zM7 6h1v1h-1zM8 6h2v1h-2zM10 6h1v1h-1zM12 6h1v1h-1zM13 6h1v1h-1zM15 6h1v1h-1zM16 6h1v1h-1zM21 6h1v1h-1zM23 6h1v1h-1zM25 6h1v1h-1zM28 6h1v1h-1zM29 6h2v1h-2zM31 6h1v1h-1zM32 6h2v1h-2zM41 6h1v1h-1zM46 6h1v1h-1zM50 6h1v1h-1zM51 6h1v1h-1zM53 6h1v1h-1zM55 6h2v1h-2zM59 6h3v1h-3zM62 6h1v1h-1zM63 6h1v1h-1zM65 6h1v1h-1zM70 6h3v1h-3zM75 6h2v1h-2zM80 6h1v1h-1zM84 6h3v1h-3zM88 6h2v1h-2zM94 6h1v1h-1zM96 6h1v1h-1zM98 6h2v1h-2zM100 6h2v1h-2zM102 6h1v1h-1zM106 6h1v1h-1zM3 7h1v1h-1zM7 7h1v1h-1zM14 7h3v1h-3zM19 7h5v1h-5zM27 7h5v1h-5zM37 7h2v1h-2zM44 7h1v1h-1zM46 7h5v1h-5zM51 7h1v1h-1zM52 7h1v1h-1zM55 7h1v1h-1zM58 7h1v1h-1zM61 7h2v1h-2zM66 7h2v1h-2zM72 7h1v1h-1zM73 7h1v1h-1zM77 7h1v1h-1zM78 7h1v1h-1zM81 7h1v1h-1zM83 7h4v1h-4zM87 7h1v1h-1zM96 7h1v1h-1zM99 7h1v1h-1zM102 7h1v1h-1zM104 7h2v1h-2zM0 8h1v1h-1zM1 8h4v1h-4zM6 8h1v1h-1zM8 8h2v1h-2zM11 8h2v1h-2zM13 8h1v1h-1zM19 8h1v1h-1zM20 8h1v1h-1zM21 8h1v1h-1zM24 8h1v1h-1zM29 8h3v1h-3zM32 8h2v1h-2zM35 8h1v1h-1zM36 8h1v1h-1zM37 8h1v1h-1zM39 8h1v1h-1zM41 8h2v1h-2zM44 8h1v1h-1zM49 8h1v1h-1zM53 8h1v1h-1zM55 8h3v1h-3zM58 8h1v1h-1zM59 8h1v1h-1zM60 8h2v1h-2zM62 8h2v1h-2zM67 8h2v1h-2zM70 8h1v1h-1zM71 8h1v1h-1zM72 8h2v1h-2zM74 8h1v1h-1zM75 8h1v1h-1zM76 8h1v1h-1zM77 8h1v1h-1zM78 8h1v1h-1zM80 8h1v1h-1zM84 8h1v1h-1zM87 8h5v1h-5zM95 8h1v1h-1zM104 8h1v1h-1zM109 8h1v1h-1zM1 9h1v1h-1zM3 9h1v1h-1zM5 9h3v1h-3zM10 9h1v1h-1zM11 9h1v1h-1zM13 9h1v1h-1zM14 9h1v1h-1zM19 9h1v1h-1zM27 9h1v1h-1zM29 9h1v1h-1zM30 9h1v1h-1zM35 9h2v1h-2zM41 9h2v1h-2zM48 9h1v1h-1zM51 9h4v1h-4zM58 9h1v1h-1zM65 9h1v1h-1zM68 9h1v1h-1zM71 9h2v1h-2zM73 9h2v1h-2zM75 9h3v1h-3zM78 9h1v1h-1zM80 9h1v1h-1zM84 9h1v1h-1zM87 9h1v1h-1zM94 9h1v1h-1zM98 9h2v1h-2zM105 9h1v1h-1zM9 10h1v1h-1zM13 10h3v1h-3zM16 10h2v1h-2zM19 10h1v1h-1zM22 10h1v1h-1zM28 10h2v1h-2zM30 10h1v1h-1zM39 10h2v1h-2zM45 10h1v1h-1zM55 10h2v1h-2zM70 10h1v1h-1zM72 10h1v1h-1zM73 10h1v1h-1zM84 10h1v1h-1zM86 10h2v1h-2zM94 10h2v1h-2zM96 10h1v1h-1zM102 10h1v1h-1zM105 10h1v1h-1zM108 10h1v1h-1z" fill="#1a1a1a" opacity="0.9"/></svg>
<div class="a" style="left:229px;top:772px;width:672px;height:9px;background:linear-gradient(90deg,#d8d8d8 0,#b9b9b9 60px,#b3b3b3 100%)"></div>
<div class="a" style="left:901px;top:771px;width:330px;height:12px;background:#c6c6c6;border-left:1px solid #3a3a3a;border-top:1px solid #3a3a3a"></div>
<div class="a" style="left:1070px;top:772px;width:1px;height:10px;background:#3a3a3a"></div>
<div class="t" style="left:952px;top:773px;color:#222;letter-spacing:0.3px">Importo Bollo</div>
<div class="t" style="left:1125px;top:773px;color:#222;letter-spacing:0.3px">Sconto/maggiorazione</div>
<div class="a" style="left:888px;top:776px;width:5px;height:5px;background:#9a9a9a"></div>
<div class="a" style="left:1215px;top:161px;width:20px;height:620px;background:#e4e4e4"></div>
<div class="a" style="left:1215px;top:169px;width:20px;height:2px;background:#111"></div>
<div class="a" style="left:1215px;top:173px;width:20px;height:2px;background:#111"></div>
<div class="t" style="left:1219px;top:255px;color:#3b2a8a">L</div>
<div class="a" style="left:1215px;top:332px;width:20px;height:2px;background:#222"></div>
<div class="a" style="left:1215px;top:334px;width:20px;height:18px;background:#c3c3c3"></div>
<div class="a" style="left:1215px;top:352px;width:20px;height:1px;background:#222"></div>
<div class="a" style="left:1215px;top:372px;width:20px;height:30px;background:#c3c3c3;border-top:1px solid #222;border-bottom:1px solid #222"></div>
<div class="t" style="left:1219px;top:418px;color:#b07020">i</div>
<div class="t" style="left:1219px;top:428px;color:#1a2a6a">c</div>
<div class="t" style="left:1219px;top:500px;color:#1a2a6a">c</div>
<div class="t" style="left:1219px;top:578px;color:#1a2a6a">c</div>
<div class="a" style="left:1215px;top:640px;width:20px;height:1px;background:#333"></div>
<div class="a" style="left:1215px;top:660px;width:20px;height:20px;background:#d0d0d0;border-top:1px solid #555"></div>
<div class="a" style="left:1215px;top:684px;width:20px;height:16px;background:#bcd8e0"></div>
<div class="a" style="left:1215px;top:700px;width:20px;height:50px;background:#c6c6c6;border-top:1px solid #333;border-bottom:1px solid #333"></div>
<!--/EXTRA-->
<!--DLG-->
<div id="dlg"></div>
<div class="a" style="left:227px;top:114px;width:993px;height:29.5px;border-radius:7px 7px 0 0;background:linear-gradient(90deg,#f3f2f1 0%,#f7f1ec 25%,#faf2eb 45%,#fbf4ee 75%,#f9f4f0 100%)"></div>
<div class="t" style="left:234.3px;top:121.8px;letter-spacing:0.1px">Piano dei conti:</div>
<svg class="a" style="left:1199px;top:122px" width="14" height="14" viewBox="0 0 14 14"><path d="M2 2l10 10M12 2L2 12" stroke="#222" stroke-width="1.3"/></svg>
<div class="t" style="left:250.2px;top:147.9px;letter-spacing:-0.31px">PIANO DEI CONTI</div>
<div class="a" style="left:250px;top:164px;width:99px;height:2px;background:#2d63a6"></div>
<div class="t" style="left:370.8px;top:147.9px;color:#8c8c8c;letter-spacing:-0.11px">OPZIONI</div>
<div class="t" style="left:442.8px;top:147.9px;color:#8c8c8c;letter-spacing:-0.25px">STAMPA</div>
<svg class="a" style="left:1132px;top:149px" width="17" height="17" viewBox="0 0 17 17"><g fill="#2e6aa8"><circle cx="3.5" cy="8.5" r="2.6"/><circle cx="13" cy="3.3" r="2.6"/><circle cx="13" cy="13.7" r="2.6"/></g><path d="M3.5 8.5L13 3.3M3.5 8.5L13 13.7" stroke="#2e6aa8" stroke-width="1.6"/></svg>
<div class="t" style="left:1150px;top:151px;letter-spacing:0.2px">Condividi</div>
<div class="a" style="left:237px;top:170px;width:974px;height:75px;border:1px solid #dcdcdc;border-radius:6px;background:#fff"></div>
<svg class="a" style="left:258px;top:179px" width="30" height="30" viewBox="0 0 30 30">
<circle cx="15" cy="15" r="14.3" fill="#2c68a5"/>
<path d="M10.6 13C10.6 10.3 12.6 9.3 15 9.3C17.6 9.3 19.5 10.8 19.5 12.9C19.5 14.8 18.2 15.6 16.9 16.4C15.7 17.2 15.1 17.8 15.1 19.3" fill="none" stroke="#fff" stroke-width="3.3"/>
<rect x="13.3" y="20.5" width="3.6" height="3.2" fill="#fff"/></svg>
<div class="t c" style="left:232.7px;top:219px;width:80px;font-size:11px">Guida</div>
<div class="sep" style="left:309px;top:180px;height:58px;background:#a6a6a6"></div>
<svg class="a" style="left:329px;top:179px" width="30" height="32" viewBox="0 0 30 32">
<path d="M2.5 1.2h14.5l5 5v21.5a1.6 1.6 0 0 1-1.6 1.6h-17.9a1.6 1.6 0 0 1-1.6-1.6v-25a1.6 1.6 0 0 1 1.6-1.5z" fill="#e3e3e3"/>
<path d="M17 1.2l5 5h-5z" fill="#c9c9c9"/>
<g stroke="#c2c2c2" stroke-width="1"><line x1="5" y1="11.7" x2="19" y2="11.7"/><line x1="5" y1="15.3" x2="19" y2="15.3"/><line x1="5" y1="19" x2="19" y2="19"/></g>
<path d="M23 18.5v11.5M17.3 24.2h11.5" stroke="#6b6b6b" stroke-width="2.4"/></svg>
<div class="t c" style="left:302px;top:212.2px;width:80px;font-size:11px;color:#9a9a9a;letter-spacing:0.1px">Nuovo</div>
<div class="t c" style="left:302px;top:224.6px;width:80px;font-size:11px;color:#9a9a9a;letter-spacing:0.3px">conto</div>
<div class="a" style="left:381.4px;top:177.2px;width:13.5px;height:13.5px;border:1px solid #5f5f5f;border-radius:3px;background:#f3f3f3"></div>
<div class="a" style="left:381.4px;top:200.4px;width:13.5px;height:13.5px;border:1px solid #5f5f5f;border-radius:3px;background:#f3f3f3"></div>
<div class="a" style="left:381.4px;top:223.6px;width:13.5px;height:13.5px;border:1px solid #5f5f5f;border-radius:3px;background:#f3f3f3"></div>
<div class="t" style="left:400.9px;top:179.3px">Visualizza solo i conti movimentati</div>
<div class="t" style="left:400.9px;top:202px;letter-spacing:-0.17px">Visualizza i conti con saldo diverso da zero</div>
<div class="t" style="left:400.9px;top:224.7px;letter-spacing:-0.17px">Visualizza anche i conti nascosti</div>
<div class="sep" style="left:634px;top:180px;height:57px;background:#a6a6a6"></div>
<div class="a" style="left:641px;top:177.2px;width:13.5px;height:13.5px;border:1px solid #5f5f5f;border-radius:3px;background:#f3f3f3"></div>
<div class="a" style="left:641px;top:200.4px;width:13.5px;height:13.5px;border:1px solid #cdcdcd;border-radius:3px;background:#f3f3f3"></div>
<div class="a" style="left:641px;top:223.6px;width:13.5px;height:13.5px;border:1px solid #5f5f5f;border-radius:3px;background:#f3f3f3"></div>
<div class="t" style="left:660.9px;top:179.3px;letter-spacing:0.07px">Visualizza tutti i conti di clienti/fornitori presenti negli anni</div>
<div class="t" style="left:660.9px;top:202px;letter-spacing:0.1px;color:#9d9d9d">Filtra soli i conti di clienti/fornitori non presenti nell'anno</div>
<div class="t" style="left:660.9px;top:224.7px;letter-spacing:-0.3px">Visualizza Mastri</div>
<div class="sep" style="left:979px;top:180px;height:58px;background:#a6a6a6"></div>
<div class="a" style="left:986.2px;top:200.4px;width:13.5px;height:13.5px;border:1px solid #5f5f5f;border-radius:3px;background:#f3f3f3"></div>
<div class="t" style="left:1006.4px;top:201.7px;letter-spacing:-0.08px">Raccordi bilancio</div>
<div class="sep" style="left:1108px;top:180px;height:58px;background:#a6a6a6"></div>
<div class="a" style="left:237px;top:254px;width:974px;height:489px;border:1px solid #d2d2d2;background:#fff"></div>
<div class="a" style="left:238px;top:255px;width:82px;height:19px;background:#ffffe0"></div>
<div class="a" style="left:321px;top:255px;width:279px;height:19px;background:#ffffe0"></div>
<div class="a" style="left:601px;top:255px;width:99px;height:19px;background:#ffffe0"></div>
<div class="a" style="left:701px;top:255px;width:29px;height:19px;background:#ffffe0"></div>
<div class="a" style="left:731px;top:255px;width:39px;height:19px;background:#ffffe0"></div>
<div class="a" style="left:771px;top:255px;width:64px;height:19px;background:#c0fac0"></div>
<div class="a" style="left:836px;top:255px;width:64px;height:19px;background:#c0fac0"></div>
<div class="a" style="left:901px;top:255px;width:49px;height:19px;background:#ffffe0"></div>
<div class="a" style="left:951px;top:255px;width:51px;height:19px;background:#ffffe0"></div>
<div class="a" style="left:1003px;top:255px;width:51px;height:19px;background:#ffffe0"></div>
<div class="a" style="left:985px;top:255.5px;width:16.5px;height:18px;border:1px solid #d0d0d0;border-radius:2px;background:#fff"></div>
<svg class="a" style="left:988px;top:260px" width="11" height="8" viewBox="0 0 11 8"><path d="M1 1.5l4.5 4.5L10 1.5" fill="none" stroke="#444" stroke-width="1"/></svg>
<div class="a" style="left:1037px;top:255.5px;width:16.5px;height:18px;border:1px solid #d0d0d0;border-radius:2px;background:#fff"></div>
<svg class="a" style="left:1040px;top:260px" width="11" height="8" viewBox="0 0 11 8"><path d="M1 1.5l4.5 4.5L10 1.5" fill="none" stroke="#444" stroke-width="1"/></svg>
<div class="a" style="left:240px;top:256.5px;width:1px;height:14px;background:#111"></div>
<div class="a" style="left:238px;top:275px;width:816px;height:50px;background:#f3f3f3"></div>
<div class="a" style="left:238px;top:274px;width:816px;height:1px;background:#d6d6d6"></div>
<div class="a" style="left:238px;top:325px;width:816px;height:1px;background:#d6d6d6"></div>
<div class="a" style="left:238px;top:345px;width:816px;height:1px;background:#dadada"></div>
<div class="a" style="left:238px;top:365px;width:816px;height:1px;background:#dadada"></div>
<div class="a" style="left:238px;top:385px;width:816px;height:1px;background:#dadada"></div>
<div class="a" style="left:238px;top:405px;width:816px;height:1px;background:#dadada"></div>
<div class="a" style="left:238px;top:425px;width:816px;height:1px;background:#dadada"></div>
<div class="a" style="left:238px;top:445px;width:816px;height:1px;background:#dadada"></div>
<div class="a" style="left:238px;top:465px;width:816px;height:1px;background:#dadada"></div>
<div class="a" style="left:238px;top:485px;width:816px;height:1px;background:#dadada"></div>
<div class="a" style="left:238px;top:505px;width:816px;height:1px;background:#dadada"></div>
<div class="a" style="left:238px;top:525px;width:816px;height:1px;background:#dadada"></div>
<div class="a" style="left:238px;top:545px;width:816px;height:1px;background:#dadada"></div>
<div class="a" style="left:238px;top:565px;width:816px;height:1px;background:#dadada"></div>
<div class="a" style="left:238px;top:585px;width:816px;height:1px;background:#dadada"></div>
<div class="a" style="left:238px;top:605px;width:816px;height:1px;background:#dadada"></div>
<div class="a" style="left:238px;top:625px;width:816px;height:1px;background:#dadada"></div>
<div class="a" style="left:238px;top:645px;width:816px;height:1px;background:#dadada"></div>
<div class="a" style="left:238px;top:665px;width:816px;height:1px;background:#dadada"></div>
<div class="a" style="left:238px;top:685px;width:816px;height:1px;background:#dadada"></div>
<div class="a" style="left:238px;top:705px;width:816px;height:1px;background:#dadada"></div>
<div class="a" style="left:238px;top:725px;width:816px;height:1px;background:#dadada"></div>
<div class="a" style="left:320px;top:255px;width:1px;height:487px;background:#dadada"></div>
<div class="a" style="left:600px;top:255px;width:1px;height:487px;background:#dadada"></div>
<div class="a" style="left:700px;top:255px;width:1px;height:487px;background:#dadada"></div>
<div class="a" style="left:730px;top:255px;width:1px;height:487px;background:#dadada"></div>
<div class="a" style="left:770px;top:255px;width:1px;height:487px;background:#dadada"></div>
<div class="a" style="left:835px;top:255px;width:1px;height:487px;background:#dadada"></div>
<div class="a" style="left:900px;top:255px;width:1px;height:487px;background:#dadada"></div>
<div class="a" style="left:950px;top:255px;width:1px;height:487px;background:#dadada"></div>
<div class="a" style="left:1002px;top:255px;width:1px;height:487px;background:#dadada"></div>
<div class="a" style="left:1054px;top:255px;width:1px;height:487px;background:#dadada"></div>
<div class="t c" style="left:237px;top:293.8px;width:83px;letter-spacing:-0.06px;text-indent:-0.06px;">Conto</div>
<div class="t c" style="left:320px;top:293.8px;width:280px;letter-spacing:-0.07px;text-indent:-0.07px;">Descrizione</div>
<div class="t" style="left:636.5px;top:294.3px;transform:scaleX(0.92);transform-origin:0 0">Saldo</div>
<div class="t c" style="left:700px;top:293.8px;width:30px;letter-spacing:-0.3px;text-indent:-0.3px;">PE</div>
<div class="t c" style="left:730px;top:294.3px;width:40px;letter-spacing:0px;text-indent:0px;transform:scaleX(0.9);">APCR</div>
<div class="t c" style="left:770px;top:294.3px;width:65px;letter-spacing:0px;text-indent:0px;transform:scaleX(0.81);">CEED</div>
<div class="t c" style="left:835px;top:294.3px;width:65px;letter-spacing:0px;text-indent:0px;transform:scaleX(0.82);">CEEA</div>
<div class="t c" style="left:900px;top:294.3px;width:50px;letter-spacing:0px;text-indent:0px;transform:scaleX(0.9);">% II.DD.</div>
<div class="t c" style="left:950px;top:293.8px;width:52px;letter-spacing:-0.24px;text-indent:-0.24px;">Ritenuta</div>
<div class="t c" style="left:1002px;top:279px;width:52px;letter-spacing:-0.24px;text-indent:-0.24px;">Ritenuta</div>
<div class="t c" style="left:1002px;top:294px;width:52px;letter-spacing:0px;text-indent:0px;">su</div>
<div class="t c" style="left:1002px;top:308.7px;width:52px;letter-spacing:0.38px;text-indent:0.38px;">bonifici</div>
<div class="t" style="left:241.6px;top:329.4px;transform:scaleX(0.886);transform-origin:0 0">10000</div>
<div class="t" style="left:324.4px;top:329.4px;letter-spacing:0.05px">Capit.sottoscr.non richiamato</div>
<div class="t" style="left:600px;top:329.4px;width:96.5px;text-align:right;transform:scaleX(0.94);transform-origin:100% 0">0,00</div>
<div class="t c" style="left:700px;top:329.4px;width:30px;letter-spacing:0px;text-indent:0px;">P</div>
<div class="t c" style="left:730px;top:329.4px;width:40px;letter-spacing:0px;text-indent:0px;">P</div>
<div class="t c" style="left:835px;top:329.4px;width:65px;letter-spacing:0px;text-indent:0px;transform:scaleX(0.89);">A0100 01</div>
<div class="a" style="left:970.3px;top:328.5px;width:12.5px;height:12.5px;border:1px solid #c9c9c9;border-radius:3px;background:#f9f9f9"></div>
<div class="a" style="left:1022.2px;top:328.5px;width:12.5px;height:12.5px;border:1px solid #c9c9c9;border-radius:3px;background:#f9f9f9"></div>
<div class="t" style="left:241.6px;top:349.4px;transform:scaleX(0.886);transform-origin:0 0">10010</div>
<div class="t" style="left:324.4px;top:349.4px;letter-spacing:-0.12px">Cap.sottoscr.rich.e non vers.</div>
<div class="t" style="left:600px;top:349.4px;width:96.5px;text-align:right;transform:scaleX(0.94);transform-origin:100% 0">0,00</div>
<div class="t c" style="left:700px;top:349.4px;width:30px;letter-spacing:0px;text-indent:0px;">P</div>
<div class="t c" style="left:730px;top:349.4px;width:40px;letter-spacing:0px;text-indent:0px;">P</div>
<div class="t c" style="left:835px;top:349.4px;width:65px;letter-spacing:0px;text-indent:0px;transform:scaleX(0.89);">A0100 01</div>
<div class="a" style="left:970.3px;top:348.5px;width:12.5px;height:12.5px;border:1px solid #c9c9c9;border-radius:3px;background:#f9f9f9"></div>
<div class="a" style="left:1022.2px;top:348.5px;width:12.5px;height:12.5px;border:1px solid #c9c9c9;border-radius:3px;background:#f9f9f9"></div>
<div class="t" style="left:241.6px;top:369.4px;transform:scaleX(0.886);transform-origin:0 0">10020</div>
<div class="t" style="left:324.4px;top:369.4px;letter-spacing:-0.04px">Capitale sociale/Patr.netto</div>
<div class="t" style="left:600px;top:369.4px;width:96.5px;text-align:right;transform:scaleX(0.94);transform-origin:100% 0">0,00</div>
<div class="t c" style="left:700px;top:369.4px;width:30px;letter-spacing:0px;text-indent:0px;">P</div>
<div class="t c" style="left:730px;top:369.4px;width:40px;letter-spacing:0px;text-indent:0px;">P</div>
<div class="t c" style="left:835px;top:369.4px;width:65px;letter-spacing:0px;text-indent:0px;transform:scaleX(0.89);">A0100 01</div>
<div class="a" style="left:970.3px;top:368.5px;width:12.5px;height:12.5px;border:1px solid #c9c9c9;border-radius:3px;background:#f9f9f9"></div>
<div class="a" style="left:1022.2px;top:368.5px;width:12.5px;height:12.5px;border:1px solid #c9c9c9;border-radius:3px;background:#f9f9f9"></div>
<div class="t" style="left:241.6px;top:389.4px;transform:scaleX(0.886);transform-origin:0 0">10021</div>
<div class="t" style="left:324.4px;top:389.4px;letter-spacing:-0.2px">Capitale versato socio....</div>
<div class="t" style="left:600px;top:389.4px;width:96.5px;text-align:right;transform:scaleX(0.94);transform-origin:100% 0">0,00</div>
<div class="t c" style="left:700px;top:389.4px;width:30px;letter-spacing:0px;text-indent:0px;">P</div>
<div class="t c" style="left:730px;top:389.4px;width:40px;letter-spacing:0px;text-indent:0px;">P</div>
<div class="t c" style="left:835px;top:389.4px;width:65px;letter-spacing:0px;text-indent:0px;transform:scaleX(0.89);">A0100 01</div>
<div class="a" style="left:970.3px;top:388.5px;width:12.5px;height:12.5px;border:1px solid #c9c9c9;border-radius:3px;background:#f9f9f9"></div>
<div class="a" style="left:1022.2px;top:388.5px;width:12.5px;height:12.5px;border:1px solid #c9c9c9;border-radius:3px;background:#f9f9f9"></div>
<div class="t" style="left:241.6px;top:409.4px;transform:scaleX(0.886);transform-origin:0 0">10027</div>
<div class="t" style="left:324.4px;top:409.4px;letter-spacing:-0.1px">Cap.soc.azioni privilegiate</div>
<div class="t" style="left:600px;top:409.4px;width:96.5px;text-align:right;transform:scaleX(0.94);transform-origin:100% 0">0,00</div>
<div class="t c" style="left:700px;top:409.4px;width:30px;letter-spacing:0px;text-indent:0px;">P</div>
<div class="t c" style="left:730px;top:409.4px;width:40px;letter-spacing:0px;text-indent:0px;">P</div>
<div class="t c" style="left:835px;top:409.4px;width:65px;letter-spacing:0px;text-indent:0px;transform:scaleX(0.89);">A0100 02</div>
<div class="a" style="left:970.3px;top:408.5px;width:12.5px;height:12.5px;border:1px solid #c9c9c9;border-radius:3px;background:#f9f9f9"></div>
<div class="a" style="left:1022.2px;top:408.5px;width:12.5px;height:12.5px;border:1px solid #c9c9c9;border-radius:3px;background:#f9f9f9"></div>
<div class="t" style="left:241.6px;top:429.4px;transform:scaleX(0.886);transform-origin:0 0">10028</div>
<div class="t" style="left:324.4px;top:429.4px;letter-spacing:-0.11px">Cap.soc.azioni di risparmio</div>
<div class="t" style="left:600px;top:429.4px;width:96.5px;text-align:right;transform:scaleX(0.94);transform-origin:100% 0">0,00</div>
<div class="t c" style="left:700px;top:429.4px;width:30px;letter-spacing:0px;text-indent:0px;">P</div>
<div class="t c" style="left:730px;top:429.4px;width:40px;letter-spacing:0px;text-indent:0px;">P</div>
<div class="t c" style="left:835px;top:429.4px;width:65px;letter-spacing:0px;text-indent:0px;transform:scaleX(0.89);">A0100 03</div>
<div class="a" style="left:970.3px;top:428.5px;width:12.5px;height:12.5px;border:1px solid #c9c9c9;border-radius:3px;background:#f9f9f9"></div>
<div class="a" style="left:1022.2px;top:428.5px;width:12.5px;height:12.5px;border:1px solid #c9c9c9;border-radius:3px;background:#f9f9f9"></div>
<div class="t" style="left:241.6px;top:449.4px;transform:scaleX(0.886);transform-origin:0 0">10029</div>
<div class="t" style="left:324.4px;top:449.4px;letter-spacing:-0.09px">Capitale sociale quote</div>
<div class="t" style="left:600px;top:449.4px;width:96.5px;text-align:right;transform:scaleX(0.94);transform-origin:100% 0">0,00</div>
<div class="t c" style="left:700px;top:449.4px;width:30px;letter-spacing:0px;text-indent:0px;">P</div>
<div class="t c" style="left:730px;top:449.4px;width:40px;letter-spacing:0px;text-indent:0px;">P</div>
<div class="t c" style="left:835px;top:449.4px;width:65px;letter-spacing:0px;text-indent:0px;transform:scaleX(0.89);">A0100 04</div>
<div class="a" style="left:970.3px;top:448.5px;width:12.5px;height:12.5px;border:1px solid #c9c9c9;border-radius:3px;background:#f9f9f9"></div>
<div class="a" style="left:1022.2px;top:448.5px;width:12.5px;height:12.5px;border:1px solid #c9c9c9;border-radius:3px;background:#f9f9f9"></div>
<div class="t" style="left:241.6px;top:469.4px;transform:scaleX(0.886);transform-origin:0 0">10100</div>
<div class="t" style="left:324.4px;top:469.4px;letter-spacing:-0.21px">Ris.da soprapr.azioni o quote</div>
<div class="t" style="left:600px;top:469.4px;width:96.5px;text-align:right;transform:scaleX(0.94);transform-origin:100% 0">0,00</div>
<div class="t c" style="left:700px;top:469.4px;width:30px;letter-spacing:0px;text-indent:0px;">P</div>
<div class="t c" style="left:730px;top:469.4px;width:40px;letter-spacing:0px;text-indent:0px;">P</div>
<div class="t c" style="left:835px;top:469.4px;width:65px;letter-spacing:0px;text-indent:0px;transform:scaleX(0.89);">A0200 01</div>
<div class="a" style="left:970.3px;top:468.5px;width:12.5px;height:12.5px;border:1px solid #c9c9c9;border-radius:3px;background:#f9f9f9"></div>
<div class="a" style="left:1022.2px;top:468.5px;width:12.5px;height:12.5px;border:1px solid #c9c9c9;border-radius:3px;background:#f9f9f9"></div>
<div class="t" style="left:241.6px;top:489.4px;transform:scaleX(0.886);transform-origin:0 0">10110</div>
<div class="t" style="left:324.4px;top:489.4px;letter-spacing:-0.22px">Riserva da soprapprezzo di fusione</div>
<div class="t" style="left:600px;top:489.4px;width:96.5px;text-align:right;transform:scaleX(0.94);transform-origin:100% 0">0,00</div>
<div class="t c" style="left:700px;top:489.4px;width:30px;letter-spacing:0px;text-indent:0px;">P</div>
<div class="t c" style="left:730px;top:489.4px;width:40px;letter-spacing:0px;text-indent:0px;">P</div>
<div class="t c" style="left:835px;top:489.4px;width:65px;letter-spacing:0px;text-indent:0px;transform:scaleX(0.89);">A0200 01</div>
<div class="a" style="left:970.3px;top:488.5px;width:12.5px;height:12.5px;border:1px solid #c9c9c9;border-radius:3px;background:#f9f9f9"></div>
<div class="a" style="left:1022.2px;top:488.5px;width:12.5px;height:12.5px;border:1px solid #c9c9c9;border-radius:3px;background:#f9f9f9"></div>
<div class="t" style="left:241.6px;top:509.4px;transform:scaleX(0.886);transform-origin:0 0">10120</div>
<div class="t" style="left:324.4px;top:509.4px;letter-spacing:-0.14px">Riserva da soprapr.di confer.</div>
<div class="t" style="left:600px;top:509.4px;width:96.5px;text-align:right;transform:scaleX(0.94);transform-origin:100% 0">0,00</div>
<div class="t c" style="left:700px;top:509.4px;width:30px;letter-spacing:0px;text-indent:0px;">P</div>
<div class="t c" style="left:730px;top:509.4px;width:40px;letter-spacing:0px;text-indent:0px;">P</div>
<div class="t c" style="left:835px;top:509.4px;width:65px;letter-spacing:0px;text-indent:0px;transform:scaleX(0.89);">A0200 01</div>
<div class="a" style="left:970.3px;top:508.5px;width:12.5px;height:12.5px;border:1px solid #c9c9c9;border-radius:3px;background:#f9f9f9"></div>
<div class="a" style="left:1022.2px;top:508.5px;width:12.5px;height:12.5px;border:1px solid #c9c9c9;border-radius:3px;background:#f9f9f9"></div>
<div class="t" style="left:241.6px;top:529.4px;transform:scaleX(0.886);transform-origin:0 0">10200</div>
<div class="t" style="left:324.4px;top:529.4px;letter-spacing:-0.21px">Riserva di rivalutazione legge....</div>
<div class="t" style="left:600px;top:529.4px;width:96.5px;text-align:right;transform:scaleX(0.94);transform-origin:100% 0">0,00</div>
<div class="t c" style="left:700px;top:529.4px;width:30px;letter-spacing:0px;text-indent:0px;">P</div>
<div class="t c" style="left:730px;top:529.4px;width:40px;letter-spacing:0px;text-indent:0px;">P</div>
<div class="t c" style="left:835px;top:529.4px;width:65px;letter-spacing:0px;text-indent:0px;transform:scaleX(0.89);">A0300 09</div>
<div class="a" style="left:970.3px;top:528.5px;width:12.5px;height:12.5px;border:1px solid #c9c9c9;border-radius:3px;background:#f9f9f9"></div>
<div class="a" style="left:1022.2px;top:528.5px;width:12.5px;height:12.5px;border:1px solid #c9c9c9;border-radius:3px;background:#f9f9f9"></div>
<div class="t" style="left:241.6px;top:549.4px;transform:scaleX(0.886);transform-origin:0 0">10201</div>
<div class="t" style="left:324.4px;top:549.4px;letter-spacing:-0.21px">Riserva di rivalutazione legge....</div>
<div class="t" style="left:600px;top:549.4px;width:96.5px;text-align:right;transform:scaleX(0.94);transform-origin:100% 0">0,00</div>
<div class="t c" style="left:700px;top:549.4px;width:30px;letter-spacing:0px;text-indent:0px;">P</div>
<div class="t c" style="left:730px;top:549.4px;width:40px;letter-spacing:0px;text-indent:0px;">P</div>
<div class="t c" style="left:835px;top:549.4px;width:65px;letter-spacing:0px;text-indent:0px;transform:scaleX(0.89);">A0300 09</div>
<div class="a" style="left:970.3px;top:548.5px;width:12.5px;height:12.5px;border:1px solid #c9c9c9;border-radius:3px;background:#f9f9f9"></div>
<div class="a" style="left:1022.2px;top:548.5px;width:12.5px;height:12.5px;border:1px solid #c9c9c9;border-radius:3px;background:#f9f9f9"></div>
<div class="t" style="left:241.6px;top:569.4px;transform:scaleX(0.886);transform-origin:0 0">10202</div>
<div class="t" style="left:324.4px;top:569.4px;letter-spacing:-0.21px">Riserva di rivalutazione legge 21/11/2000, n.342</div>
<div class="t" style="left:600px;top:569.4px;width:96.5px;text-align:right;transform:scaleX(0.94);transform-origin:100% 0">0,00</div>
<div class="t c" style="left:700px;top:569.4px;width:30px;letter-spacing:0px;text-indent:0px;">P</div>
<div class="t c" style="left:730px;top:569.4px;width:40px;letter-spacing:0px;text-indent:0px;">P</div>
<div class="t c" style="left:835px;top:569.4px;width:65px;letter-spacing:0px;text-indent:0px;transform:scaleX(0.89);">A0300 09</div>
<div class="a" style="left:970.3px;top:568.5px;width:12.5px;height:12.5px;border:1px solid #c9c9c9;border-radius:3px;background:#f9f9f9"></div>
<div class="a" style="left:1022.2px;top:568.5px;width:12.5px;height:12.5px;border:1px solid #c9c9c9;border-radius:3px;background:#f9f9f9"></div>
<div class="t" style="left:241.6px;top:589.4px;transform:scaleX(0.886);transform-origin:0 0">10203</div>
<div class="t" style="left:324.4px;top:589.4px;letter-spacing:-0.21px">Riserva di rivalutazione legge 28/12/2001, n.448</div>
<div class="t" style="left:600px;top:589.4px;width:96.5px;text-align:right;transform:scaleX(0.94);transform-origin:100% 0">0,00</div>
<div class="t c" style="left:700px;top:589.4px;width:30px;letter-spacing:0px;text-indent:0px;">P</div>
<div class="t c" style="left:730px;top:589.4px;width:40px;letter-spacing:0px;text-indent:0px;">P</div>
<div class="t c" style="left:835px;top:589.4px;width:65px;letter-spacing:0px;text-indent:0px;transform:scaleX(0.89);">A0300 09</div>
<div class="a" style="left:970.3px;top:588.5px;width:12.5px;height:12.5px;border:1px solid #c9c9c9;border-radius:3px;background:#f9f9f9"></div>
<div class="a" style="left:1022.2px;top:588.5px;width:12.5px;height:12.5px;border:1px solid #c9c9c9;border-radius:3px;background:#f9f9f9"></div>
<div class="t" style="left:241.6px;top:609.4px;transform:scaleX(0.886);transform-origin:0 0">10204</div>
<div class="t" style="left:324.4px;top:609.4px;letter-spacing:-0.21px">Riserva di rivalutazione legge 24/12/2003, n.350</div>
<div class="t" style="left:600px;top:609.4px;width:96.5px;text-align:right;transform:scaleX(0.94);transform-origin:100% 0">0,00</div>
<div class="t c" style="left:700px;top:609.4px;width:30px;letter-spacing:0px;text-indent:0px;">P</div>
<div class="t c" style="left:730px;top:609.4px;width:40px;letter-spacing:0px;text-indent:0px;">P</div>
<div class="t c" style="left:835px;top:609.4px;width:65px;letter-spacing:0px;text-indent:0px;transform:scaleX(0.89);">A0300 09</div>
<div class="a" style="left:970.3px;top:608.5px;width:12.5px;height:12.5px;border:1px solid #c9c9c9;border-radius:3px;background:#f9f9f9"></div>
<div class="a" style="left:1022.2px;top:608.5px;width:12.5px;height:12.5px;border:1px solid #c9c9c9;border-radius:3px;background:#f9f9f9"></div>
<div class="t" style="left:241.6px;top:629.4px;transform:scaleX(0.886);transform-origin:0 0">10205</div>
<div class="t" style="left:324.4px;top:629.4px;letter-spacing:-0.21px">Riserva di rivalutazione legge 23/12/2005, n.266</div>
<div class="t" style="left:600px;top:629.4px;width:96.5px;text-align:right;transform:scaleX(0.94);transform-origin:100% 0">0,00</div>
<div class="t c" style="left:700px;top:629.4px;width:30px;letter-spacing:0px;text-indent:0px;">P</div>
<div class="t c" style="left:730px;top:629.4px;width:40px;letter-spacing:0px;text-indent:0px;">P</div>
<div class="t c" style="left:835px;top:629.4px;width:65px;letter-spacing:0px;text-indent:0px;transform:scaleX(0.89);">A0300 09</div>
<div class="a" style="left:970.3px;top:628.5px;width:12.5px;height:12.5px;border:1px solid #c9c9c9;border-radius:3px;background:#f9f9f9"></div>
<div class="a" style="left:1022.2px;top:628.5px;width:12.5px;height:12.5px;border:1px solid #c9c9c9;border-radius:3px;background:#f9f9f9"></div>
<div class="t" style="left:241.6px;top:649.4px;transform:scaleX(0.886);transform-origin:0 0">10206</div>
<div class="t" style="left:324.4px;top:649.4px;letter-spacing:-0.21px">Riserva di rivalutazione Dl 185/2008</div>
<div class="t" style="left:600px;top:649.4px;width:96.5px;text-align:right;transform:scaleX(0.94);transform-origin:100% 0">0,00</div>
<div class="t c" style="left:700px;top:649.4px;width:30px;letter-spacing:0px;text-indent:0px;">P</div>
<div class="t c" style="left:730px;top:649.4px;width:40px;letter-spacing:0px;text-indent:0px;">P</div>
<div class="t c" style="left:835px;top:649.4px;width:65px;letter-spacing:0px;text-indent:0px;transform:scaleX(0.89);">A0300 09</div>
<div class="a" style="left:970.3px;top:648.5px;width:12.5px;height:12.5px;border:1px solid #c9c9c9;border-radius:3px;background:#f9f9f9"></div>
<div class="a" style="left:1022.2px;top:648.5px;width:12.5px;height:12.5px;border:1px solid #c9c9c9;border-radius:3px;background:#f9f9f9"></div>
<div class="t" style="left:241.6px;top:669.4px;transform:scaleX(0.886);transform-origin:0 0">10210</div>
<div class="t" style="left:324.4px;top:669.4px;letter-spacing:-0.21px">Riserva di rivalutazione legge...</div>
<div class="t" style="left:600px;top:669.4px;width:96.5px;text-align:right;transform:scaleX(0.94);transform-origin:100% 0">0,00</div>
<div class="t c" style="left:700px;top:669.4px;width:30px;letter-spacing:0px;text-indent:0px;">P</div>
<div class="t c" style="left:730px;top:669.4px;width:40px;letter-spacing:0px;text-indent:0px;">P</div>
<div class="t c" style="left:835px;top:669.4px;width:65px;letter-spacing:0px;text-indent:0px;transform:scaleX(0.89);">A0300 09</div>
<div class="a" style="left:970.3px;top:668.5px;width:12.5px;height:12.5px;border:1px solid #c9c9c9;border-radius:3px;background:#f9f9f9"></div>
<div class="a" style="left:1022.2px;top:668.5px;width:12.5px;height:12.5px;border:1px solid #c9c9c9;border-radius:3px;background:#f9f9f9"></div>
<div class="t" style="left:241.6px;top:689.4px;transform:scaleX(0.886);transform-origin:0 0">10211</div>
<div class="t" style="left:324.4px;top:689.4px;letter-spacing:-0.21px">Riserva di rivalutazione legge...</div>
<div class="t" style="left:600px;top:689.4px;width:96.5px;text-align:right;transform:scaleX(0.94);transform-origin:100% 0">0,00</div>
<div class="t c" style="left:700px;top:689.4px;width:30px;letter-spacing:0px;text-indent:0px;">P</div>
<div class="t c" style="left:730px;top:689.4px;width:40px;letter-spacing:0px;text-indent:0px;">P</div>
<div class="t c" style="left:835px;top:689.4px;width:65px;letter-spacing:0px;text-indent:0px;transform:scaleX(0.89);">A0300 09</div>
<div class="a" style="left:970.3px;top:688.5px;width:12.5px;height:12.5px;border:1px solid #c9c9c9;border-radius:3px;background:#f9f9f9"></div>
<div class="a" style="left:1022.2px;top:688.5px;width:12.5px;height:12.5px;border:1px solid #c9c9c9;border-radius:3px;background:#f9f9f9"></div>
<div class="t" style="left:241.6px;top:709.4px;transform:scaleX(0.886);transform-origin:0 0">10212</div>
<div class="t" style="left:324.4px;top:709.4px;letter-spacing:-0.21px">Riserva di rivalutazione legge 21/11/2000, n.342</div>
<div class="t" style="left:600px;top:709.4px;width:96.5px;text-align:right;transform:scaleX(0.94);transform-origin:100% 0">0,00</div>
<div class="t c" style="left:700px;top:709.4px;width:30px;letter-spacing:0px;text-indent:0px;">P</div>
<div class="t c" style="left:730px;top:709.4px;width:40px;letter-spacing:0px;text-indent:0px;">P</div>
<div class="t c" style="left:835px;top:709.4px;width:65px;letter-spacing:0px;text-indent:0px;transform:scaleX(0.89);">A0300 09</div>
<div class="a" style="left:970.3px;top:708.5px;width:12.5px;height:12.5px;border:1px solid #c9c9c9;border-radius:3px;background:#f9f9f9"></div>
<div class="a" style="left:1022.2px;top:708.5px;width:12.5px;height:12.5px;border:1px solid #c9c9c9;border-radius:3px;background:#f9f9f9"></div>
<div class="t" style="left:241.6px;top:729.4px;transform:scaleX(0.886);transform-origin:0 0">10213</div>
<div class="t" style="left:324.4px;top:729.4px;letter-spacing:-0.21px">Riserva di rivalutazione legge 28/12/2001, n.448</div>
<div class="t" style="left:600px;top:729.4px;width:96.5px;text-align:right;transform:scaleX(0.94);transform-origin:100% 0">0,00</div>
<div class="t c" style="left:700px;top:729.4px;width:30px;letter-spacing:0px;text-indent:0px;">P</div>
<div class="t c" style="left:730px;top:729.4px;width:40px;letter-spacing:0px;text-indent:0px;">P</div>
<div class="t c" style="left:835px;top:729.4px;width:65px;letter-spacing:0px;text-indent:0px;transform:scaleX(0.89);">A0300 09</div>
<div class="a" style="left:970.3px;top:728.5px;width:12.5px;height:12.5px;border:1px solid #c9c9c9;border-radius:3px;background:#f9f9f9"></div>
<div class="a" style="left:1022.2px;top:728.5px;width:12.5px;height:12.5px;border:1px solid #c9c9c9;border-radius:3px;background:#f9f9f9"></div>
<div class="a" style="left:237px;top:742px;width:974px;height:10px;border-top:1px solid #d2d2d2;background:#f3f3f3"></div>
<div class="a" style="left:1194px;top:275px;width:16px;height:466px;background:#efefef"></div>
<div class="a" style="left:1201px;top:291.5px;width:2px;height:17px;background:#8a8a8a;border-radius:1px"></div>
<div class="a" style="left:227px;top:753px;width:993.5px;height:22px;background:#1a4a8d;border-radius:0 0 7px 7px"></div>
<div class="t" style="left:231.6px;top:757.7px;color:#fff;letter-spacing:-0.07px">Doppio click per selezionare un conto</div>
<!--/DLG-->

<!--ARROW-->
<svg class="a" style="left:0;top:0" width="1225" height="781" viewBox="0 0 1225 781">
<line x1="72" y1="516" x2="227" y2="420.2" stroke="#e24f4a" stroke-width="3.6" stroke-linecap="round"/>
<path d="M233.2 416.3L223 416.2 228.9 425.6z" fill="#e24f4a"/>
</svg>
<!--/ARROW-->
</body></html>
